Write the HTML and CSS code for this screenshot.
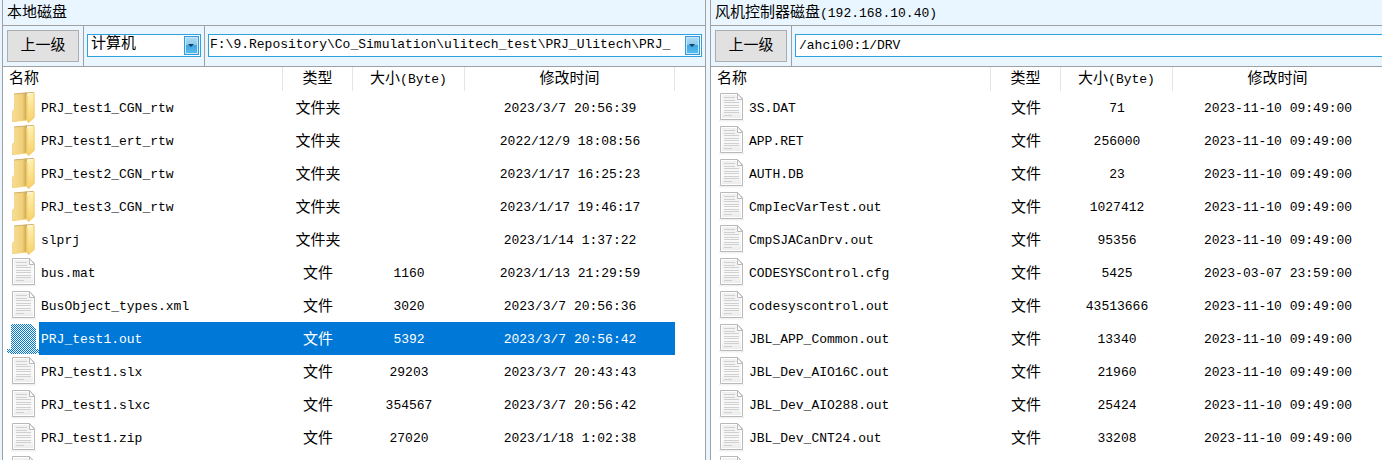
FILE: index.html
```html
<!DOCTYPE html>
<html lang="zh-CN">
<head>
<meta charset="utf-8">
<title>文件传输</title>
<link rel="stylesheet" href="styles.css">
</head>
<body>
<svg class="defs" width="0" height="0" aria-hidden="true">
  <defs>
    <linearGradient id="fold-back" x1="0" x2="1" y1="0" y2="0">
      <stop offset="0" stop-color="#f9df92"/><stop offset=".7" stop-color="#efcf7a"/><stop offset="1" stop-color="#c9a244"/>
    </linearGradient>
    <linearGradient id="fold-front" x1="0" x2="0" y1="0" y2="1">
      <stop offset="0" stop-color="#fff3b4"/><stop offset="1" stop-color="#f9cf68"/>
    </linearGradient>
    <linearGradient id="arrow-face" x1="0" x2="0" y1="0" y2="1">
      <stop offset="0" stop-color="#a9d9f3"/><stop offset=".45" stop-color="#8ccbee"/><stop offset=".46" stop-color="#3fa5df"/><stop offset="1" stop-color="#56bdf0"/>
    </linearGradient>
    <linearGradient id="paper" x1="0" x2="0" y1="0" y2="1">
      <stop offset="0" stop-color="#f0f0f0"/><stop offset=".6" stop-color="#fafafa"/><stop offset="1" stop-color="#ececec"/>
    </linearGradient>
    <pattern id="dither" width="2" height="2" patternUnits="userSpaceOnUse">
      <path d="M0 0h1v1H0zM1 1h1v1H1z" fill="#0078d7"/>
    </pattern>
  </defs>
  <symbol id="folder" viewBox="0 0 32 32">
    <path d="M7 2L20 0.500V28L5 30V19L7 17Z" fill="url(#fold-back)"/>
    <path d="M5.500 29V19.500L7.500 17.500V2.500" fill="none" stroke="#f0d793"/>
    <path d="M7 2L27 0.300" fill="none" stroke="#cdb06a"/>
    <path d="M5 29.500L21 28" fill="none" stroke="#f3d57e"/>
    <path d="M19.500 3L27.500 0.500V25.500L21.500 31L19.500 28Z" fill="url(#fold-front)"/>
    <path d="M20 3.500V28L21.500 30.500L27 25.500V1" fill="none" stroke="#edcc70"/>
  </symbol>
  <symbol id="file" viewBox="0 0 32 32">
    <path d="M4 28.500H29" stroke="#f1f1f1" stroke-width="2"/>
    <path d="M5.500 1.500H22.500L27.500 6.500V27.500H5.500Z" fill="#fff" stroke="#b9b9b9"/>
    <path d="M7 3H21L26 9V26H7Z" fill="url(#paper)"/>
    <path d="M9 5.500H20M9 8.500H20M9 10.500H24M9 13.500H24M9 15.500H24M9 18.500H24M9 20.500H24M9 23.500H17" stroke="#d0d0d0"/>
    <path d="M22.500 1.500V7.500H27.500Z" fill="#fff" stroke="#b9b9b9"/>
  </symbol>
  <symbol id="file-selected" viewBox="0 0 32 32">
    <path d="M4 1H24L29 6V26H32V30H29V31H4V30H0V26H4Z" fill="url(#dither)" shape-rendering="crispEdges"/>
  </symbol>
  <symbol id="arrow" viewBox="0 0 15 19">
    <rect x=".5" y=".5" width="14" height="18" fill="#c6e8fa" stroke="#3399d8"/>
    <rect x="2" y="2" width="11" height="15" fill="url(#arrow-face)"/>
    <path d="M4 8H10L7 11Z" fill="#143f61"/>
  </symbol>
</svg>

<main class="commander">
  <section class="pane" aria-label="本地磁盘">
    <h2 class="title">本地磁盘</h2>
    <div class="toolbar">
      <div class="cell"><button class="up" type="button">上一级</button></div>
      <div class="cell">
        <div class="combo drive">
          <select class="cjk" aria-label="驱动器"><option>计算机</option></select>
          <svg class="arrow"><use href="#arrow"/></svg>
        </div>
      </div>
      <div class="cell grow">
        <div class="combo">
          <select aria-label="本地路径"><option>F:\9.Repository\Co_Simulation\ulitech_test\PRJ_Ulitech\PRJ_</option></select>
          <svg class="arrow"><use href="#arrow"/></svg>
        </div>
      </div>
    </div>
    <table class="list">
      <colgroup><col class="c-icon"><col class="c-name"><col class="c-type"><col class="c-size"><col class="c-time"><col></colgroup>
      <thead><tr><th class="name" colspan="2">名称</th><th>类型</th><th>大小<span class="latin">(Byte)</span></th><th>修改时间</th><th class="rest"></th></tr></thead>
      <tbody>
        <tr><td><svg class="icon"><use href="#folder"/></svg></td><td>PRJ_test1_CGN_rtw</td><td>文件夹</td><td></td><td>2023/3/7 20:56:39</td></tr>
        <tr><td><svg class="icon"><use href="#folder"/></svg></td><td>PRJ_test1_ert_rtw</td><td>文件夹</td><td></td><td>2022/12/9 18:08:56</td></tr>
        <tr><td><svg class="icon"><use href="#folder"/></svg></td><td>PRJ_test2_CGN_rtw</td><td>文件夹</td><td></td><td>2023/1/17 16:25:23</td></tr>
        <tr><td><svg class="icon"><use href="#folder"/></svg></td><td>PRJ_test3_CGN_rtw</td><td>文件夹</td><td></td><td>2023/1/17 19:46:17</td></tr>
        <tr><td><svg class="icon"><use href="#folder"/></svg></td><td>slprj</td><td>文件夹</td><td></td><td>2023/1/14 1:37:22</td></tr>
        <tr><td><svg class="icon"><use href="#file"/></svg></td><td>bus.mat</td><td>文件</td><td>1160</td><td>2023/1/13 21:29:59</td></tr>
        <tr><td><svg class="icon"><use href="#file"/></svg></td><td>BusObject_types.xml</td><td>文件</td><td>3020</td><td>2023/3/7 20:56:36</td></tr>
        <tr class="selected"><td><svg class="icon"><use href="#file-selected"/></svg></td><td>PRJ_test1.out</td><td>文件</td><td>5392</td><td>2023/3/7 20:56:42</td></tr>
        <tr><td><svg class="icon"><use href="#file"/></svg></td><td>PRJ_test1.slx</td><td>文件</td><td>29203</td><td>2023/3/7 20:43:43</td></tr>
        <tr><td><svg class="icon"><use href="#file"/></svg></td><td>PRJ_test1.slxc</td><td>文件</td><td>354567</td><td>2023/3/7 20:56:42</td></tr>
        <tr><td><svg class="icon"><use href="#file"/></svg></td><td>PRJ_test1.zip</td><td>文件</td><td>27020</td><td>2023/1/18 1:02:38</td></tr>
        <tr><td><svg class="icon"><use href="#file"/></svg></td><td></td><td></td><td></td><td></td></tr>
      </tbody>
    </table>
  </section>

  <section class="pane remote" aria-label="风机控制器磁盘">
    <h2 class="title">风机控制器磁盘<span class="latin">(192.168.10.40)</span></h2>
    <div class="toolbar">
      <div class="cell"><button class="up" type="button">上一级</button></div>
      <div class="cell grow"><input class="path" type="text" aria-label="远程路径" value="/ahci00:1/DRV"></div>
    </div>
    <table class="list">
      <colgroup><col class="c-icon"><col class="c-name"><col class="c-type"><col class="c-size"><col class="c-time"></colgroup>
      <thead><tr><th class="name" colspan="2">名称</th><th>类型</th><th>大小<span class="latin">(Byte)</span></th><th>修改时间</th></tr></thead>
      <tbody>
        <tr><td><svg class="icon"><use href="#file"/></svg></td><td>3S.DAT</td><td>文件</td><td>71</td><td>2023-11-10 09:49:00</td></tr>
        <tr><td><svg class="icon"><use href="#file"/></svg></td><td>APP.RET</td><td>文件</td><td>256000</td><td>2023-11-10 09:49:00</td></tr>
        <tr><td><svg class="icon"><use href="#file"/></svg></td><td>AUTH.DB</td><td>文件</td><td>23</td><td>2023-11-10 09:49:00</td></tr>
        <tr><td><svg class="icon"><use href="#file"/></svg></td><td>CmpIecVarTest.out</td><td>文件</td><td>1027412</td><td>2023-11-10 09:49:00</td></tr>
        <tr><td><svg class="icon"><use href="#file"/></svg></td><td>CmpSJACanDrv.out</td><td>文件</td><td>95356</td><td>2023-11-10 09:49:00</td></tr>
        <tr><td><svg class="icon"><use href="#file"/></svg></td><td>CODESYSControl.cfg</td><td>文件</td><td>5425</td><td>2023-03-07 23:59:00</td></tr>
        <tr><td><svg class="icon"><use href="#file"/></svg></td><td>codesyscontrol.out</td><td>文件</td><td>43513666</td><td>2023-11-10 09:49:00</td></tr>
        <tr><td><svg class="icon"><use href="#file"/></svg></td><td>JBL_APP_Common.out</td><td>文件</td><td>13340</td><td>2023-11-10 09:49:00</td></tr>
        <tr><td><svg class="icon"><use href="#file"/></svg></td><td>JBL_Dev_AIO16C.out</td><td>文件</td><td>21960</td><td>2023-11-10 09:49:00</td></tr>
        <tr><td><svg class="icon"><use href="#file"/></svg></td><td>JBL_Dev_AIO288.out</td><td>文件</td><td>25424</td><td>2023-11-10 09:49:00</td></tr>
        <tr><td><svg class="icon"><use href="#file"/></svg></td><td>JBL_Dev_CNT24.out</td><td>文件</td><td>33208</td><td>2023-11-10 09:49:00</td></tr>
        <tr><td><svg class="icon"><use href="#file"/></svg></td><td></td><td></td><td></td><td></td></tr>
      </tbody>
    </table>
  </section>
</main>
</body>
</html>
```

FILE: styles.css
```css
* { box-sizing: border-box; }

body {
  margin: 0;
  height: 100vh;
  overflow: hidden;
  background: #e9f6ff;
  color: #000;
  font: 13px/18px "Liberation Mono", "Noto Sans CJK SC", monospace;
}

.defs { position: absolute; }

.commander {
  display: grid;
  grid-template-columns: minmax(0, 704fr) minmax(0, 672fr);
  gap: 4px;
  height: 100%;
  padding-left: 2px;
}

.pane {
  display: flex;
  flex-direction: column;
  min-width: 0;
  overflow: hidden;
  border: 0 solid #a0a0a0;
  border-width: 0 1px;
}

.remote { border-right: 0; }

.title {
  margin: 0;
  height: 26px;
  padding: 2px 0 0 4px;
  border-bottom: 1px solid #a0a0a0;
  font-size: 15px;
  font-weight: 400;
  line-height: 24px;
}

.latin { font-size: 13px; }

.toolbar {
  display: flex;
  height: 41px;
  flex: none;
  border-bottom: 1px solid #a0a0a0;
}

.cell {
  display: flex;
  align-items: center;
  padding: 0 3px 2px;
  border-right: 1px solid #a0a0a0;
}

.cell:first-child { padding: 0 4px 0 4px; }
.cell.grow { flex: 1; min-width: 0; border-right: 0; }
.remote .cell.grow { padding-right: 0; }

.up {
  width: 72px;
  height: 32px;
  padding: 2px 0 0;
  border: 1px solid #adadad;
  border-radius: 0;
  background: #e1e1e1;
  color: #000;
  font: inherit;
  font-size: 15px;
}

.combo {
  display: flex;
  align-items: center;
  width: 100%;
  height: 23px;
  padding-right: 1px;
  border: 1px solid #2fa0e0;
  background: #fff;
}

.drive { width: 114px; }

.combo select {
  flex: 1;
  min-width: 0;
  height: 21px;
  padding: 0 0 0 1px;
  border: 0;
  appearance: none;
  background: none;
  color: #000;
  font: inherit;
  line-height: 20px;
}

.combo .cjk { padding-left: 3px; font-size: 15px; }

.arrow { flex: none; width: 15px; height: 19px; pointer-events: none; }

.path {
  width: 100%;
  height: 23px;
  padding: 0 3px;
  border: 1px solid #2fa0e0;
  border-right: 0;
  background: #fff;
  color: #000;
  font: inherit;
}

.list {
  width: 100%;
  table-layout: fixed;
  border-spacing: 0;
  background: #fff;
}

.c-icon { width: 36px; }
.c-name { width: 244px; }
.c-type { width: 70px; }
.c-size { width: 112px; }
.c-time { width: 210px; }

th {
  height: 24px;
  padding: 2px 0 0;
  border-right: 1px solid #e5e5e5;
  font-size: 15px;
  font-weight: 400;
  line-height: 22px;
  white-space: nowrap;
}

th.name { padding-left: 6px; text-align: left; }
th.rest { border-right: 0; }

td {
  height: 33px;
  padding: 2px 0 0;
  text-align: center;
  white-space: nowrap;
}

td:first-child { padding: 0 0 0 4px; text-align: left; }
td:nth-child(2) { padding-left: 2px; text-align: left; }
td:nth-child(3) { padding-top: 4px; font-size: 15px; }

.selected td:not(:first-child) { background: #0078d7; color: #fff; }

.icon { display: block; width: 32px; height: 32px; }
```
